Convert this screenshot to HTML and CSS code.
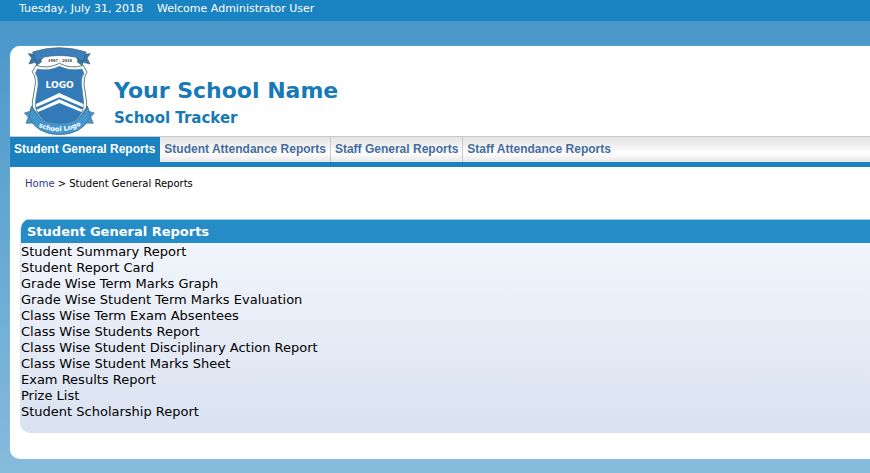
FILE: index.html
```html
<!DOCTYPE html>
<html lang="en">
<head>
<meta charset="utf-8">
<title>Student General Reports</title>
<link rel="stylesheet" href="styles.css">
</head>
<body>
<div class="topbar"><span>Tuesday, July 31, 2018</span><span>Welcome Administrator User</span></div>
<div class="page">
  <header class="header">
    <svg class="logo" viewBox="0 6 240 270" role="img" aria-label="School logo">
      <path d="M48 64Q84 76 118 58Q154 76 190 64L201 84Q192 96 192 120L200 174Q203 214 172 240Q146 262 118 268Q90 262 66 240Q33 214 37 174L46 120Q48 96 36 84Z" fill="#fff" stroke="#5d7f86" stroke-width="3"/>
      <path d="M52 75Q88 82 118 67Q150 82 186 75L192 88Q183 100 185 124L191 174Q194 208 166 229Q142 247 118 254Q94 247 72 229Q43 208 46 174L54 124Q56 100 46 88Z" fill="#337ab9" stroke="#64868c" stroke-width="2"/>
      <path d="M48 180L118 147L190 180V190L118 160L48 190Z" fill="#fff"/>
      <path d="M50 197L118 166L188 197L184 204L118 177L54 204Z" fill="#fff"/>
      <path d="M44 31L25 29L35 42L27 60L46 55L50 64L64 54L58 28Z" fill="#3276b2" stroke="#3b5d6c" stroke-width="2"/>
      <path d="M192 31L211 29L201 42L210 60L190 55L186 64L172 54L178 28Z" fill="#3276b2" stroke="#3b5d6c" stroke-width="2"/>
      <path d="M68 38H170V62Q146 64 118 54Q90 64 68 62Z" fill="#fff"/>
      <path d="M38 24Q118 -2 198 24L190 52Q182 48 170 44V40Q118 29 68 40V44Q56 48 48 54Z" fill="#3b80bd" stroke="#3b5d6c" stroke-width="2"/>
      <path d="M35 186L30 202L13 207L25 219L18 238L42 237L50 248L64 228Z" fill="#4297d1" stroke="#466b7c" stroke-width="2"/>
      <path d="M202 186L207 202L223 207L212 219L220 238L195 237L188 248L174 228Z" fill="#4297d1" stroke="#466b7c" stroke-width="2"/>
      <path d="M35 187Q49 236 118 238Q188 236 202 187L211 218Q187 271 118 272Q49 271 27 218Z" fill="#4297d1" stroke="#466b7c" stroke-width="2"/>
      <path id="ribbon-line" d="M42 242Q118 284 196 237" fill="none"/>
      <text x="120" y="54" class="logo-years">1907 - 2018</text>
      <text x="119" y="131" class="logo-name">LOGO</text>
      <text class="logo-ribbon"><textPath href="#ribbon-line" startOffset="50%">school Logo</textPath></text>
    </svg>
    <div class="brand">
      <h1>Your School Name</h1>
      <h2>School Tracker</h2>
    </div>
  </header>
  <nav class="tabs">
    <a class="active" href="#">Student General Reports</a>
    <a href="#">Student Attendance Reports</a>
    <a href="#">Staff General Reports</a>
    <a href="#">Staff Attendance Reports</a>
  </nav>
  <main>
    <div class="crumbs"><a href="#">Home</a> &gt; Student General Reports</div>
    <section class="panel">
      <h3>Student General Reports</h3>
      <ul>
        <li><a href="#">Student Summary Report</a></li>
        <li><a href="#">Student Report Card</a></li>
        <li><a href="#">Grade Wise Term Marks Graph</a></li>
        <li><a href="#">Grade Wise Student Term Marks Evaluation</a></li>
        <li><a href="#">Class Wise Term Exam Absentees</a></li>
        <li><a href="#">Class Wise Students Report</a></li>
        <li><a href="#">Class Wise Student Disciplinary Action Report</a></li>
        <li><a href="#">Class Wise Student Marks Sheet</a></li>
        <li><a href="#">Exam Results Report</a></li>
        <li><a href="#">Prize List</a></li>
        <li><a href="#">Student Scholarship Report</a></li>
      </ul>
    </section>
  </main>
</div>
</body>
</html>
```
FILE: styles.css
```css
* {
  box-sizing: border-box;
}

html {
  min-height: 100%;
  background: linear-gradient(#4795c9, #86bbdc);
}

body {
  margin: 0;
  font: 13px/16px Verdana, "DejaVu Sans", sans-serif;
  color: #000;
}

h1, h2, h3, ul {
  margin: 0;
  padding: 0;
}

a {
  color: inherit;
  text-decoration: none;
}

.topbar {
  display: flex;
  gap: 14px;
  height: 21px;
  padding-left: 19px;
  background: #1a83c1;
  color: #fff;
  font-size: 11px;
  line-height: 18px;
}

.page {
  margin: 25px 0 14px 10px;
  padding-bottom: 26px;
  background: #fff;
  border-radius: 10px 0 0 10px;
  box-shadow: 0 0 1px rgba(225, 240, 249, 0.8);
}

.header {
  display: flex;
  gap: 14px;
  height: 90px;
  padding-left: 10px;
}

.logo {
  width: 80px;
  height: 90px;
}

.logo text {
  text-anchor: middle;
  font-weight: bold;
}

.logo .logo-years {
  font: bold 15px "Liberation Serif", serif;
  fill: #263238;
}

.logo .logo-name {
  font-size: 27px;
  fill: #fff;
}

.logo .logo-ribbon {
  font-size: 20px;
  fill: #fff;
}

.brand {
  padding-top: 31px;
  color: #1779b7;
}

.brand h1 {
  font-size: 22px;
  line-height: 28px;
}

.brand h2 {
  font-size: 15px;
  line-height: 26px;
}

.tabs {
  display: flex;
  height: 31px;
  border-top: 1px solid #c9c9c9;
  border-bottom: 5px solid #1b81bf;
  background: linear-gradient(#e2e2e2, #fff 65%, #e7e7e7);
  font: bold 12px/24px "Liberation Sans", Arial, sans-serif;
  color: #456c9f;
}

.tabs a {
  padding: 0 4px;
  border-right: 1px solid #c9c9c9;
}

.tabs a:last-child {
  border-right: 0;
}

.tabs .active {
  background: #1b81bf;
  border-color: #1b81bf;
  color: #fff;
}

.crumbs {
  padding: 9px 15px 27px;
  font-size: 10px;
}

.crumbs a {
  color: #2b3990;
}

.panel {
  margin-left: 10px;
  padding-bottom: 13px;
  border-left: 1px solid #dce4f0;
  border-radius: 10px 0 0 10px;
  background: linear-gradient(#f5f7fc, #d9e2f1);
  overflow: hidden;
}

.panel h3 {
  padding-left: 6px;
  background: #258cc7;
  border-top: 1px solid #a9d3ec;
  color: #fff;
  font-size: 13px;
  line-height: 23px;
}

.panel ul {
  list-style: none;
  padding-top: 1px;
}
```
